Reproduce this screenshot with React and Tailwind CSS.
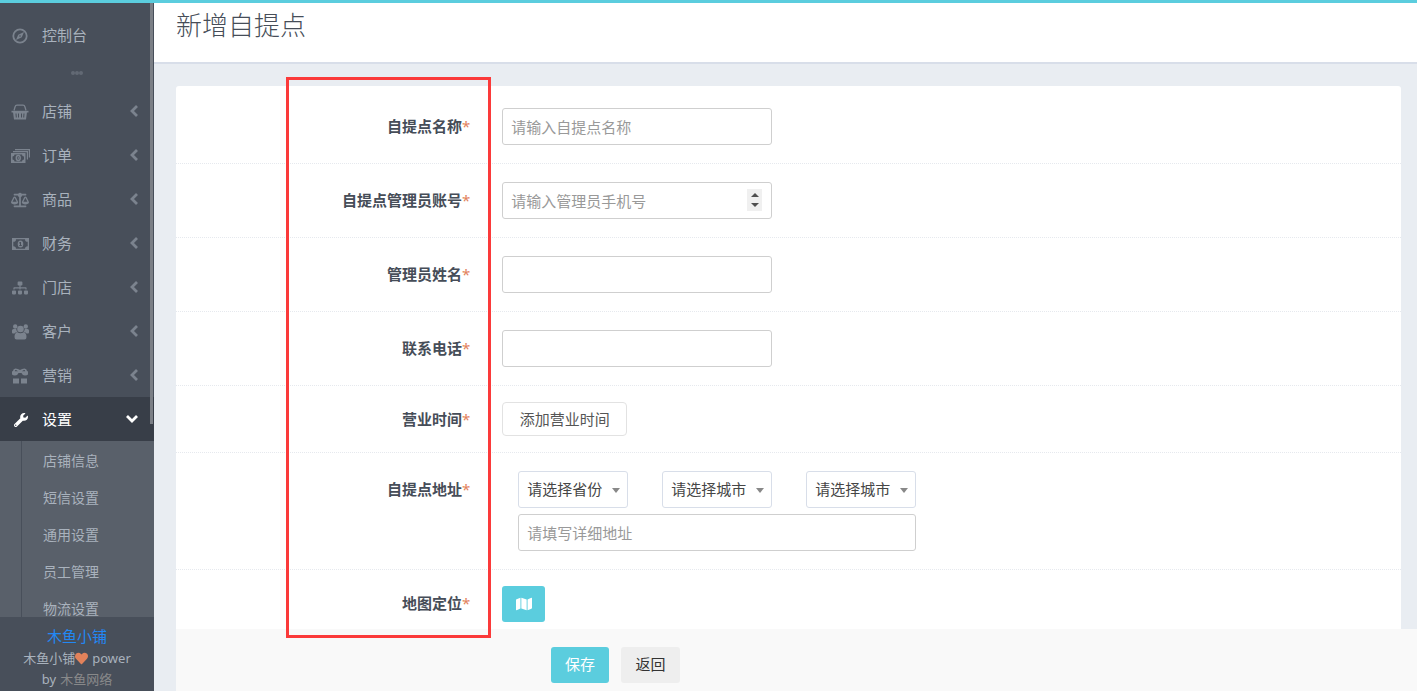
import React, { useState } from 'react';
import { FaBalanceScale, FaSitemap, FaWrench, FaHeart, FaMap } from 'react-icons/fa';

function CompassIcon() {
    return (
        <svg width="16" height="16" viewBox="0 0 16 16" fill="none" stroke="currentColor">
            <circle cx="8" cy="8" r="6.700" strokeWidth="1.800" />
            <path fillRule="evenodd" d="M12 4L9.800 9.300 4 12l2.200-5.300zM8 7.200a.8.8 0 100 1.600.8.8 0 000-1.600z" fill="currentColor" stroke="none" />
        </svg>
    );
}

function BasketIcon() {
    return (
        <svg width="18" height="16" viewBox="0 0 18 16" fill="currentColor">
            <path d="M3 6.500L4 3q.5-1.800 2-1.800h6q1.500 0 2 1.800l1 3.500" fill="none" stroke="currentColor" strokeWidth="1.300" />
            <path d="M0.500 6.800h17v1.700h-17z" />
            <path fillRule="evenodd" d="M2 8h14l-1 7.500H3zM4.500 9.500l.3 4h1l-.3-4zM7 9.500v4h1v-4zM10 9.500v4h1v-4zM12.500 9.500l-.3 4h1l.3-4z" />
        </svg>
    );
}

function BillsIcon() {
    return (
        <svg width="19" height="14" viewBox="0 0 19 14" fill="none" stroke="currentColor">
            <path d="M4 .6h14.400v7.900M2 2.600h14.400v7.900" strokeWidth="1.200" />
            <path fillRule="evenodd" d="M0 4h14.500v10H0zM3.500 5.500Q3.500 7.500 1.500 7.500v3q2 0 2 2H11q0-2 2-2v-3q-2 0-2-2z" fill="currentColor" stroke="none" />
            <ellipse cx="7.250" cy="9" rx="2" ry="2.500" strokeWidth="1.400" />
            <path d="M7.250 8v2" />
        </svg>
    );
}

function BillIcon() {
    return (
        <svg width="17" height="12" viewBox="0 0 17 12" fill="currentColor">
            <path fillRule="evenodd" d="M0 0h17v12H0zM4 1.200Q4 3.800 1.300 3.800v4.400Q4 8.200 4 10.800h9q0-2.600 2.700-2.600V3.800Q13 3.800 13 1.200z" />
            <path fillRule="evenodd" d="M8.500 2.500q2.800 0 2.800 3.500t-2.800 3.500T5.700 6t2.800-3.500zM8 4l-1.200 1 .4.600.8-.4v2.100h-1v.8h3v-.8H9V4z" />
        </svg>
    );
}

function GroupIcon() {
    return (
        <svg width="17" height="16" viewBox="0 0 17 16" fill="currentColor">
            <circle cx="3.200" cy="2.500" r="2.200" />
            <circle cx="13.800" cy="2.500" r="2.200" />
            <circle cx="8.500" cy="5" r="3.300" />
            <path d="M0 8.500V6.500Q0 5 1.500 5h2.700q.2 2.500 2 3.500H3.500L2.500 9.500H1Q0 9.500 0 8.500zM17 8.500V6.500Q17 5 15.500 5h-2.700q-.2 2.500-2 3.500h2.700l1 1H16q1 0 1-1z" />
            <path d="M2.500 13q0-4.300 3-4.500 3 1.500 6 0 3 .2 3 4.500 0 2.500-2 2.500h-8q-2 0-2-2.500z" />
        </svg>
    );
}

function GiftIcon() {
    return (
        <svg width="16" height="16" viewBox="0 0 16 16" fill="currentColor">
            <path fillRule="evenodd" d="M0 6.500V4q0-.8 1-.9Q1.200.5 3.500.5 6 .5 8 2q2-1.500 4.500-1.500 2.300 0 2.500 2.600 1 .1 1 .9v2.500q-1 1-3 1-2.500 0-3.500-2.500h-3Q5.500 7.500 3 7.500q-2 0-3-1zM2.800 3.200H6Q3 .8 2.800 3.200zM10 3.200h3.200Q13 .8 10 3.200z" />
            <path d="M1 10.500h6v5H1zM9 10.500h6v5H9z" />
        </svg>
    );
}

function ArrowLeft() {
    return (
        <svg width="8" height="12" viewBox="0 0 8 12" fill="none" stroke="currentColor" strokeWidth="2.800" className="mr-4 ml-auto text-[#7b838e]">
            <path d="M7 1L2 6l5 5" />
        </svg>
    );
}

function ArrowDown() {
    return (
        <svg width="12" height="8" viewBox="0 0 12 8" fill="none" stroke="currentColor" strokeWidth="2.800" className="mr-4 ml-auto">
            <path d="M1 1l5 5 5-5" />
        </svg>
    );
}

const menus = [
    { name: '店铺', icon: <BasketIcon /> },
    { name: '订单', icon: <BillsIcon /> },
    { name: '商品', icon: <FaBalanceScale size={18} /> },
    { name: '财务', icon: <BillIcon /> },
    { name: '门店', icon: <FaSitemap size={16} /> },
    { name: '客户', icon: <GroupIcon /> },
    { name: '营销', icon: <GiftIcon /> },
];

const settingMenus = ['店铺信息', '短信设置', '通用设置', '员工管理', '物流设置'];

function Sidebar() {
    return (
        <aside className="relative flex w-[154px] shrink-0 flex-col bg-[#484f5a] text-[15px] text-[#a9b2bd]">
            <nav className="min-h-0 flex-1 overflow-hidden pt-2.5">
                <a href="#" className="flex h-11 items-center">
                    <span className="flex w-[42px] justify-center pt-0.5 pr-0.5 text-[#7b838e]"><CompassIcon /></span>
                    控制台
                </a>
                <div className="flex h-8 items-center justify-center">
                    <i className="size-1 rounded-full bg-[#626974]" />
                    <i className="size-1 rounded-full bg-[#626974]" />
                    <i className="size-1 rounded-full bg-[#626974]" />
                </div>
                {menus.map(menu => (
                    <a key={menu.name} href="#" className="flex h-11 items-center">
                        <span className="flex w-[42px] justify-center pt-0.5 pr-0.5 text-[#7b838e]">{menu.icon}</span>
                        {menu.name}
                        <ArrowLeft />
                    </a>
                ))}
                <a href="#" className="flex h-11 items-center bg-[#383e48] text-white">
                    <span className="flex w-[42px] justify-center pt-0.5"><FaWrench size={14} /></span>
                    设置
                    <ArrowDown />
                </a>
                <div className="flex bg-[#59606a] text-sm">
                    <div className="w-[22px] border-r border-[#484f5a]" />
                    <ul className="flex-1 pt-px pl-[21px]">
                        {settingMenus.map(name => (
                            <li key={name}><a href="#" className="flex h-[37px] items-center">{name}</a></li>
                        ))}
                    </ul>
                </div>
            </nav>
            <div className="h-[74px] shrink-0 pt-[7px] text-center text-[13px] leading-[21px]">
                <a href="#" className="block text-[15px] leading-6 text-[#2288f5]">木鱼小铺</a>
                <div className="flex items-center justify-center">
                    木鱼小铺<FaHeart size={13} className="mr-1 text-[#e2825b]" />power
                </div>
                <div className="flex items-center justify-center gap-1">
                    by <a href="#" className="text-[#88898a]">木鱼网络</a>
                </div>
            </div>
            {/* scrollbar */}
            <div className="absolute top-0 right-px h-[421px] w-[3px] bg-[#7b7f86]" />
        </aside>
    );
}

function FormRow({ label, htmlFor, tight, children }) {
    return (
        <div className={`flex items-start border-b border-dotted border-[#e6e9ee] ${tight ? 'py-4' : 'py-[18px]'}`}>
            <label htmlFor={htmlFor} className={`w-1/4 shrink-0 pr-3 text-right font-bold text-[#464d58] ${tight ? 'leading-[34px]' : 'leading-9'}`}>
                {label}<span className="font-normal text-[#e2825b]">*</span>
            </label>
            <div className="pl-5">{children}</div>
        </div>
    );
}

const inputClass = 'block h-[37px] rounded-[3px] border border-[#cfcfcf] bg-white px-2 text-[15px] text-[#464646] outline-none placeholder:text-[#999]';

function AreaSelect({ id, text }) {
    return (
        <div className="relative w-[110px]">
            <select id={id} aria-label={text} className="block h-[37px] w-full appearance-none rounded-[3px] border border-[#d8dee9] bg-white pl-2 text-[#464646]">
                <option>{text}</option>
            </select>
            <svg width="8" height="5" viewBox="0 0 8 5" className="pointer-events-none absolute top-[17px] right-2 text-[#888]" fill="currentColor">
                <path d="M0 0h8L4 5z" />
            </svg>
        </div>
    );
}

export default function App() {
    const [form, setForm] = useState({ name: '', account: '', manager: '', phone: '', address: '' });

    const handleChange = (e) => {
        setForm({ ...form, [e.target.id]: e.target.value });
    };

    return (
        <div className="flex h-screen overflow-hidden border-t-[3px] border-[#5bcdde] bg-[#e9edf2] font-['Noto_Sans','Noto_Sans_CJK_SC',sans-serif] text-[15px]">
            <Sidebar />
            <main className="relative flex min-w-0 flex-1 flex-col">
                <header className="h-[61px] shrink-0 border-b-2 border-[#d8dee9] bg-white pl-[22px]">
                    <h1 className="text-[26px] leading-[44px] font-light text-[#464d58]">新增自提点</h1>
                </header>

                <div className="min-h-0 flex-1 overflow-hidden px-4 pt-[22px] pl-[22px]">
                    <form className="rounded-t-[3px] bg-white pt-1">
                        <FormRow label="自提点名称" htmlFor="name">
                            <input id="name" value={form.name} onChange={handleChange} placeholder="请输入自提点名称" className={`${inputClass} w-[270px]`} />
                        </FormRow>
                        <FormRow label="自提点管理员账号" htmlFor="account">
                            <div className="relative">
                                <input id="account" type="number" value={form.account} onChange={handleChange} placeholder="请输入管理员手机号" className={`${inputClass} w-[270px] [&::-webkit-inner-spin-button]:appearance-none`} />
                                <div className="pointer-events-none absolute top-[7px] right-[10px] flex h-[22px] w-[15px] flex-col items-center justify-center gap-1.5 bg-[#f0f0f0] text-[#505050]">
                                    <svg width="8" height="4" viewBox="0 0 8 4" fill="currentColor"><path d="M0 4h8L4 0z" /></svg>
                                    <svg width="8" height="4" viewBox="0 0 8 4" fill="currentColor"><path d="M0 0h8L4 4z" /></svg>
                                </div>
                            </div>
                        </FormRow>
                        <FormRow label="管理员姓名" htmlFor="manager">
                            <input id="manager" value={form.manager} onChange={handleChange} className={`${inputClass} w-[270px]`} />
                        </FormRow>
                        <FormRow label="联系电话" htmlFor="phone">
                            <input id="phone" value={form.phone} onChange={handleChange} className={`${inputClass} w-[270px]`} />
                        </FormRow>
                        <FormRow label="营业时间" htmlFor="hours" tight>
                            <button id="hours" type="button" className="block h-[34px] w-[125px] rounded-[4px] border border-[#e2e2e2] bg-white text-[#555]">添加营业时间</button>
                        </FormRow>
                        <FormRow label="自提点地址" htmlFor="province">
                            <div className="ml-4 flex w-[398px] flex-col gap-1.5">
                                <div className="flex justify-between">
                                    <AreaSelect id="province" text="请选择省份" />
                                    <AreaSelect id="city" text="请选择城市" />
                                    <AreaSelect id="district" text="请选择城市" />
                                </div>
                                <input id="address" aria-label="详细地址" value={form.address} onChange={handleChange} placeholder="请填写详细地址" className={`${inputClass} w-full`} />
                            </div>
                        </FormRow>
                        <FormRow label="地图定位" htmlFor="map" tight>
                            <button id="map" type="button" aria-label="地图定位" className="flex h-9 w-[43px] items-center justify-center rounded-[3px] bg-[#5bcdde] text-white"><FaMap size={16} /></button>
                        </FormRow>
                    </form>
                </div>

                <footer className="ml-[22px] flex h-[62px] shrink-0 gap-3 bg-[#f9f9f9] pt-[18px] pl-[375px]">
                    <button type="button" className="h-9 w-[58px] rounded-[3px] bg-[#5bcdde] pb-0.5 text-white">保存</button>
                    <button type="button" className="h-9 w-[59px] rounded-[3px] bg-[#eee] pb-0.5 text-[#333]">返回</button>
                </footer>

                {/* highlight around the required labels */}
                <div className="pointer-events-none absolute top-[74px] left-[132px] h-[561px] w-[205px] border-[3px] border-[#fb3a3a]" />
            </main>
        </div>
    );
}
